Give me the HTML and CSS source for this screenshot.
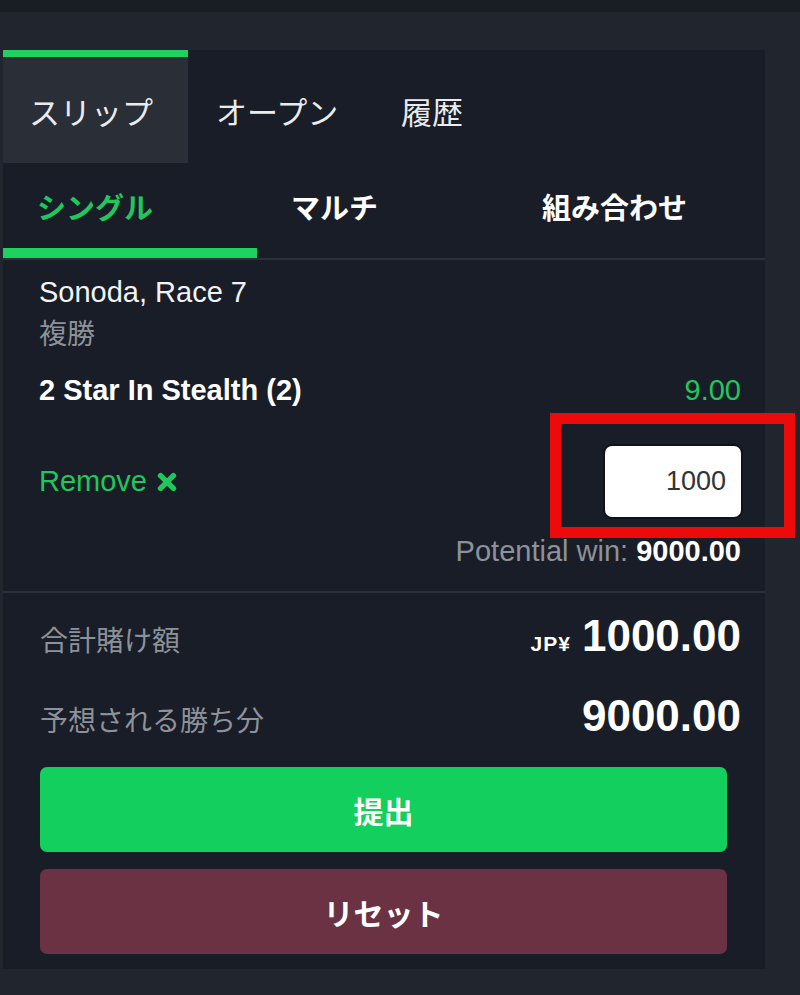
FILE: index.html
```html
<!DOCTYPE html>
<html lang="ja">
<head>
<meta charset="utf-8">
<title>Bet slip</title>
<link rel="stylesheet" href="styles.css">
</head>
<body>
<div class="topband"></div>
<div class="panel">
  <div class="tabs">
    <div class="tab active">スリップ</div>
    <div class="tab">オープン</div>
    <div class="tab">履歴</div>
  </div>
  <div class="subtabs">
    <div class="subtab active">シングル</div>
    <div class="subtab">マルチ</div>
    <div class="subtab">組み合わせ</div>
  </div>
  <div class="bet">
    <div class="event">Sonoda, Race 7</div>
    <div class="market">複勝</div>
    <div class="selection-row">
      <span class="selection">2 Star In Stealth (2)</span>
      <span class="odds">9.00</span>
    </div>
    <div class="stake-row">
      <span class="remove">Remove <svg class="x-icon" viewBox="0 0 24 24" width="22" height="22"><path d="M5 5 L19 19 M19 5 L5 19" stroke="#1fc75c" stroke-width="6" stroke-linecap="round"/></svg></span>
      <div class="stake-input">1000</div>
    </div>
    <div class="potential"><span class="pw-label">Potential win:</span> <span class="pw-value">9000.00</span></div>
  </div>
  <div class="totals">
    <div class="total-row">
      <span class="total-label">合計賭け額</span>
      <span class="total-value"><span class="currency">JP¥</span>1000.00</span>
    </div>
    <div class="total-row">
      <span class="total-label">予想される勝ち分</span>
      <span class="total-value">9000.00</span>
    </div>
    <button class="btn submit">提出</button>
    <button class="btn reset">リセット</button>
  </div>
  <div class="highlight"></div>
</div>
</body>
</html>
```
FILE: styles.css
```css
html, body {
  margin: 0;
  padding: 0;
}
body {
  background: #21252e;
  font-family: "Liberation Sans", Arial, "Noto Sans CJK JP", sans-serif;
  color: #ffffff;
  width: 800px;
  height: 995px;
  overflow: hidden;
}
.topband {
  height: 12px;
  background: #1b1d24;
}
.panel {
  position: relative;
  width: 762px;
  margin: 38px 0 0 3px;
  background: #191d27;
  padding-bottom: 15px;
}
.tabs {
  display: flex;
  height: 113px;
}
.tab {
  width: 185px;
  box-sizing: border-box;
  padding-left: 28px;
  padding-top: 7px;
  display: flex;
  align-items: center;
  font-family: "Noto Sans CJK JP", sans-serif;
  font-size: 31px;
  color: #e9ebee;
}
.tab.active {
  border-top: 7px solid #1fd160;
  padding-top: 0;
  background: #2a2e36;
  padding-left: 26px;
}
.subtabs {
  display: grid;
  grid-template-columns: repeat(3, 1fr);
  border-bottom: 2px solid #2b3039;
}
.subtab {
  height: 85px;
  padding-left: 34px;
  display: flex;
  align-items: center;
  font-family: "Noto Sans CJK JP", sans-serif;
  font-weight: 700;
  font-size: 29px;
  color: #ffffff;
  border-bottom: 10px solid transparent;
}
.subtab:nth-child(3) {
  padding-left: 31px;
}
.subtab.active {
  color: #1fc75c;
  border-bottom-color: #1fd160;
}
.bet {
  padding: 12px 24px 20px 36px;
  border-bottom: 2px solid #2b3039;
}
.event {
  font-size: 29px;
  line-height: 40px;
  color: #f2f3f5;
}
.market {
  font-family: "Noto Sans CJK JP", sans-serif;
  font-size: 28px;
  line-height: 40px;
  color: #8d929a;
}
.selection-row {
  display: flex;
  justify-content: space-between;
  margin-top: 18px;
  line-height: 40px;
  font-size: 29px;
}
.selection {
  font-weight: 700;
  color: #ffffff;
}
.odds {
  color: #1fc75c;
}
.stake-row {
  display: flex;
  justify-content: space-between;
  align-items: center;
  margin-top: 36px;
}
.remove {
  font-size: 29px;
  color: #1fc75c;
  display: flex;
  align-items: center;
  gap: 9px;
}
.stake-input {
  width: 136px;
  height: 71px;
  box-sizing: border-box;
  background: #ffffff;
  border-radius: 7px;
  box-shadow: 0 0 0 2px #0f1218;
  color: #333333;
  font-size: 27px;
  text-align: right;
  padding-right: 15px;
  line-height: 71px;
}
.potential {
  margin-top: 14px;
  text-align: right;
  font-size: 29px;
  line-height: 40px;
}
.pw-label {
  color: #8d929a;
}
.pw-value {
  font-weight: 700;
  color: #ffffff;
}
.totals {
  padding: 15px 24px 0 37px;
}
.total-row {
  display: flex;
  justify-content: space-between;
  align-items: baseline;
  height: 56px;
  line-height: 56px;
  padding-left: 0;
}
.total-row + .total-row {
  margin-top: 24px;
}
.total-label {
  font-family: "Noto Sans CJK JP", sans-serif;
  font-size: 28px;
  color: #8d929a;
}
.total-value {
  font-size: 44px;
  font-weight: 700;
  color: #ffffff;
}
.currency {
  font-size: 21px;
  letter-spacing: 1px;
  margin-right: 11px;
}
.btn {
  display: block;
  width: 687px;
  height: 85px;
  border: none;
  border-radius: 7px;
  font-family: "Noto Sans CJK JP", sans-serif;
  font-weight: 700;
  font-size: 30px;
  color: #ffffff;
  padding: 0;
}
.submit {
  margin-top: 23px;
  background: #12cf5e;
}
.reset {
  margin-top: 17px;
  background: #6a3242;
}
.highlight {
  position: absolute;
  left: 547px;
  top: 363px;
  width: 245px;
  height: 125px;
  box-sizing: border-box;
  border: 11px solid #ec0a0a;
}
```
